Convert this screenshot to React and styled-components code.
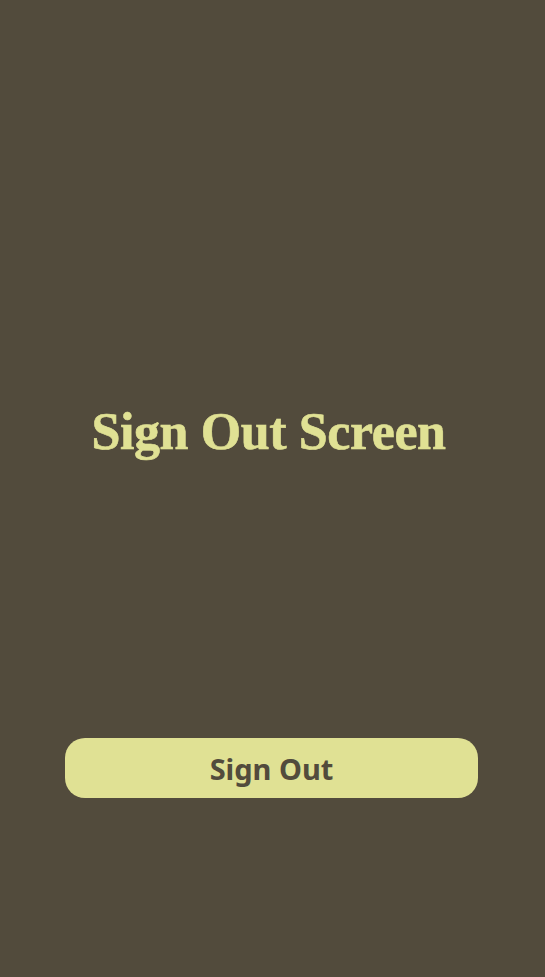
import React from "react";
import styled, { createGlobalStyle } from "styled-components";

const Global = createGlobalStyle`
  html, body {
    margin: 0;
    padding: 0;
    background: #524b3c;
  }
`;

export default function App() {
  return (
    <Screen>
      <Global />
      <Title>Sign Out Screen</Title>
      <Button type="button">Sign Out</Button>
    </Screen>
  );
}

const Screen = styled.div`
  min-height: 977px;
  background: #524b3c;
  display: flex;
  flex-direction: column;
  align-items: center;
  padding-top: 400px;
  box-sizing: border-box;
`;

const Title = styled.h1`
  margin: 0 8px 0 0;
  height: 64px;
  line-height: 64px;
  font-family: "Liberation Serif", "DejaVu Serif", serif;
  font-weight: 700;
  font-size: 52px;
  letter-spacing: -0.4px;
  color: #e0e194;
  text-align: center;
  -webkit-text-stroke: 0.6px #e0e194;
`;

const Button = styled.button`
  margin-top: 274px;
  margin-right: 2px;
  width: 413px;
  height: 60px;
  border: none;
  border-radius: 20px;
  background: #e0e194;
  color: #524b3c;
  font-family: "Noto Sans", "Open Sans", sans-serif;
  font-weight: 700;
  font-size: 29px;
  cursor: pointer;
`;
